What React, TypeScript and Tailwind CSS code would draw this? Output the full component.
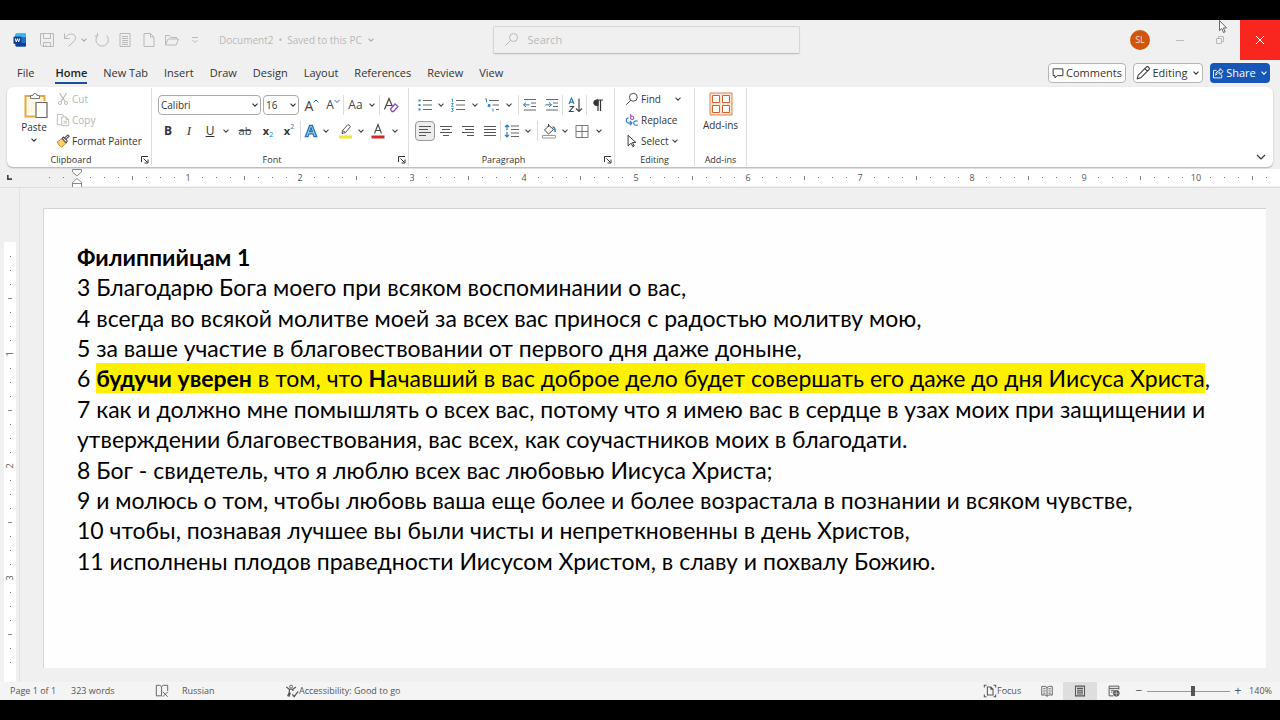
import type { ReactNode } from 'react';

const Chev = ({ className = 'text-[#444]' }: { className?: string }) => (
  <svg viewBox="0 0 8 8" className={`size-2 shrink-0 ${className}`} fill="none" stroke="currentColor" strokeWidth="1.1">
    <path d="M1.5 2.7 4 5.2 6.5 2.7" />
  </svg>
);

const Icon = ({ children, className = 'size-4', box = '0 0 16 16' }: { children: ReactNode; className?: string; box?: string }) => (
  <svg viewBox={box} className={`shrink-0 ${className}`} fill="none" stroke="currentColor" strokeWidth="1" aria-hidden="true">
    {children}
  </svg>
);

const Btn = ({ label, className = 'w-5', children }: { label: string; className?: string; children: ReactNode }) => (
  <button type="button" aria-label={label} className={`flex h-5 shrink-0 items-center justify-center ${className}`}>
    {children}
  </button>
);

const Drop = ({ label, className = 'w-4' }: { label: string; className?: string }) => (
  <Btn label={label} className={className}>
    <Chev />
  </Btn>
);

const Sep = () => <span className="h-5 w-px shrink-0 bg-[#dcdcdc]" />;

const Launcher = ({ label }: { label: string }) => (
  <button type="button" aria-label={label} className="absolute right-0.5 bottom-0.5">
    <Icon className="size-2" box="0 0 8 8">
      <path d="M.5 6V.5H7M2.5 2.5l4 4M7 3.5V7H3.5" />
    </Icon>
  </button>
);

const Group = ({ name, className, launcher, children }: { name: string; className: string; launcher?: boolean; children: ReactNode }) => (
  <section aria-label={name} className={`relative flex shrink-0 flex-col border-r border-[#dedede] ${className}`}>
    <div className="flex-1">{children}</div>
    <div className={`h-3 text-center text-[9px] leading-3 ${launcher ? 'pr-4' : ''}`}>{name}</div>
    {launcher && <Launcher label={`${name} settings`} />}
  </section>
);

const Lines = ({ rows }: { rows: [number, number][] }) => (
  <Icon className="size-4 text-[#555]">
    {rows.map(([a, b], i) => (
      <path key={i} d={`M${a} ${3.5 + i * 3}H${b}`} />
    ))}
  </Icon>
);

const tabs = ['New Tab', 'Insert', 'Draw', 'Design', 'Layout', 'References', 'Review', 'View'];

const tickKind = (n: number) => (n % 8 === 0 ? 'inch' : n % 4 === 0 ? 'half' : 'dot');

const HorizontalRuler = () => (
  <div className="relative flex h-[19px] shrink-0 overflow-hidden border-b border-[#dcdcdc] pb-px">
    <div className="flex w-[42px] shrink-0 items-center">
      <svg viewBox="0 0 6 6" className="ml-[7px] size-[5px]" fill="none" stroke="#444" strokeWidth="2">
        <path d="M1 0V5H6" />
      </svg>
    </div>
    <div className="flex w-[35px] shrink-0">
      {[-2, -1].map((n) => (
        <span key={n} className="flex w-[14px] items-center justify-center">
          <i className="size-px bg-[#777]" />
        </span>
      ))}
    </div>
    <div className="flex min-w-0 flex-1 bg-white pl-[6px]">
      {Array.from({ length: 85 }, (_, i) => i + 1).map((n) => (
        <span key={n} className="flex w-[14px] shrink-0 items-center justify-center text-[9px] text-[#555]">
          {tickKind(n) === 'inch' ? n / 8 : <i className={tickKind(n) === 'half' ? 'h-1 w-px bg-[#888]' : 'size-px bg-[#777]'} />}
        </span>
      ))}
    </div>
    <svg viewBox="0 0 10 20" className="absolute top-0 left-[72px] h-5 w-2.5" fill="#fff" stroke="#888" strokeWidth="1">
      <path d="M.5.5h9v2.500L5 7 .5 3zM.5 18.500v-5L5 9.500l4.500 4v5zM.5 14.500h9" />
    </svg>
  </div>
);

const VerticalRuler = () => (
  <div className="flex w-5 shrink-0 border-r border-[#e2e2e2] pt-[54px] pl-1">
    <div className="flex w-3 flex-col bg-white pt-[7px]">
      {Array.from({ length: 30 }, (_, i) => i + 1).map((n) => (
        <span key={n} className="flex h-[14px] shrink-0 items-center justify-center text-[9px] leading-[14px] text-[#555]">
          {tickKind(n) === 'inch' ? (
            <b className="-rotate-90 font-normal">{n / 8}</b>
          ) : (
            <i className={tickKind(n) === 'half' ? 'h-px w-1 bg-[#888]' : 'size-px bg-[#777]'} />
          )}
        </span>
      ))}
    </div>
  </div>
);

const TitleBar = () => (
  <header className="relative flex h-10 shrink-0 items-center text-[#b9b9b9]">
    <div className="flex flex-1 items-center pl-3">
      <svg viewBox="0 0 16 16" className="mr-[11px] size-4" aria-label="Word">
        <rect x="3.500" y="1.500" width="10.500" height="13" rx="1" fill="#1f6fd6" />
        <path d="M4.500 1.500H13a1 1 0 0 1 1 1V5H3.500V2.500a1 1 0 0 1 1-1z" fill="#35b8f2" />
        <path d="M3.500 11H14v2.500a1 1 0 0 1-1 1H4.500a1 1 0 0 1-1-1z" fill="#103f91" />
        <rect x="1.500" y="4.500" width="8" height="7.500" rx="1" fill="#153f8a" />
        <path d="M3.300 6.500l1 3.500 1.200-3.300L6.700 10l1-3.500" fill="none" stroke="#fff" strokeWidth="1" />
      </svg>
      <Btn label="Save" className="w-4">
        <Icon>
          <path d="M1.500 1.500h13v13h-11l-2-2zM4.500 1.500v5h7v-5M4.500 14.500v-4h7v4M7 14.500v-2" />
        </Icon>
      </Btn>
      <Btn label="Undo" className="ml-[7px] w-4">
        <Icon>
          <path d="M2.500 1.500v5h5M2.500 6.500C5 3 7.500 2 9.500 2a4 4 0 0 1 3 6.700L6.500 14.500" />
        </Icon>
      </Btn>
      <Btn label="Undo history" className="w-3">
        <Chev className="text-[#aaa]" />
      </Btn>
      <Btn label="Repeat" className="ml-1 w-4">
        <Icon>
          <path d="M12.500 3.500A6.200 6.200 0 1 1 3.500 3.800M3.500.8v3.200H.8" />
        </Icon>
      </Btn>
      <Btn label="Reading page" className="ml-[7px] w-4">
        <Icon>
          <path d="M3 1.500h10v13H3zM5 4.500h6M5 6.500h6M5 8.500h6M5 10.500h6M5 12.500h6" />
        </Icon>
      </Btn>
      <Btn label="New" className="ml-2 w-4">
        <Icon>
          <path d="M3 1.500h6.500L13 5v9.500H3zM9.500 1.500V5H13" />
        </Icon>
      </Btn>
      <Btn label="Open" className="ml-[7px] w-4">
        <Icon>
          <path d="M1.500 13V3.500h4l1.500 2h5.500V7M1.500 13 4 7h10.500l-2.300 6z" />
        </Icon>
      </Btn>
      <Btn label="Customize toolbar" className="ml-[7px] w-4">
        <Icon className="size-2" box="0 0 8 8">
          <path d="M1 1.500h6M1.500 4 4 6.500 6.500 4" />
        </Icon>
      </Btn>
      <button type="button" className="ml-4 flex items-center gap-[5px] text-[10px] whitespace-nowrap">
        <span>Document2</span>
        <span>•</span>
        <span>Saved to this PC</span>
        <Chev className="text-[#aaa]" />
      </button>
    </div>
    <label className="flex h-7 w-[307px] items-center gap-2 rounded-xs border border-[#d6d6d6] border-b-[#bdbdbd] px-2.5 shadow-xs">
      <Icon className="size-4">
        <circle cx="9.500" cy="5.500" r="4" />
        <path d="M6.500 8.500 1.500 13.500" />
      </Icon>
      <input aria-label="Search" placeholder="Search" className="min-w-0 flex-1 bg-transparent text-[11px] outline-none placeholder:text-[#b9b9b9]" />
    </label>
    <div className="flex flex-1 items-center justify-end">
      <button type="button" className="size-5 rounded-full bg-[#d0560f] text-[9px] text-[#ffdcc4]">
        SL
      </button>
      <Btn label="Minimize" className="ml-2.5 w-10">
        <i className="h-px w-2 bg-[#bbb]" />
      </Btn>
      <Btn label="Restore" className="w-10">
        <Icon className="size-2.5" box="0 0 10 10">
          <path d="M1.500 3.500h5v5h-5zM3.500 3V1.500h5v5H7" />
        </Icon>
      </Btn>
      <button type="button" aria-label="Close" className="flex size-10 items-center justify-center bg-[#f8261f] text-white">
        <Icon className="size-2.5" box="0 0 10 10">
          <path d="m1 1 8 8M9 1 1 9" />
        </Icon>
      </button>
    </div>
    <svg viewBox="0 0 10 14" className="absolute top-0 right-[52px] h-3.5 w-2.5" fill="#fff" stroke="#555" strokeWidth=".9">
      <path d="M1.500.5v10l2.300-2 1.700 4 1.600-.7-1.700-3.900h3.100z" />
    </svg>
  </header>
);

const TabRow = () => (
  <nav className="flex h-[27px] shrink-0 items-center pr-2.5 pl-[17px] text-[11px] text-[#333]">
    <button type="button" className="mr-[21px]">File</button>
    <div className="flex flex-1 items-center gap-4">
      <button type="button" className="relative font-semibold text-[#222] after:absolute after:inset-x-0 after:-bottom-0.5 after:h-0.5 after:bg-[#1a4f9c]">
        Home
      </button>
      {tabs.map((t) => (
        <button type="button" key={t}>{t}</button>
      ))}
    </div>
    <div className="flex gap-[7px] pb-px">
      <button type="button" className="flex h-5 w-[78px] items-center justify-center gap-0.5 rounded-sm border border-[#b5b5b5] bg-white">
        <Icon className="size-3">
          <path d="M1.500 2.500h13v9H7l-3 3v-3H1.500z" strokeWidth="1.300" />
        </Icon>
        Comments
      </button>
      <button type="button" className="flex h-5 w-[70px] items-center justify-center gap-0.5 rounded-sm border border-[#b5b5b5] bg-white">
        <Icon className="size-3.5">
          <path d="m1.500 14.500 1-4 9-9a1.500 1.500 0 0 1 3 3l-9 9zM10 3l3 3" strokeWidth="1.200" />
        </Icon>
        Editing
        <Chev className="ml-0.5" />
      </button>
      <button type="button" className="flex h-5 w-[60px] items-center justify-center gap-0.5 rounded-sm bg-[#1656b8] text-white">
        <Icon className="size-3">
          <path d="M6 4.500H2v10h11V10M5 11c0-4 2-6 5.500-6V2L15 6l-4.500 4V7.500C8 7.500 6.500 8.500 5 11z" strokeWidth="1.200" />
        </Icon>
        Share
        <Chev className="ml-0.5 text-white" />
      </button>
    </div>
  </nav>
);

const Clipboard = () => (
  <Group name="Clipboard" className="w-[145px]" launcher>
    <div className="flex">
      <button type="button" className="ml-[11px] flex w-8 flex-col items-center pt-[3px] text-[10px]">
        <svg viewBox="0 0 26 28" className="ml-1 h-7 w-[26px]" fill="none" aria-hidden="true">
          <path d="M7 5H2.500v20.500H12M17 5h4.500v5" stroke="#e9a63a" strokeWidth="2" />
          <path d="M4.500 7h15v4H12v12H4.500z" fill="#fff7e6" />
          <path d="M7.500 7.500v-3H10a2 2 0 0 1 4 0h2.500v3z" fill="#fff" stroke="#777" />
          <path d="M13 11.500h11v15H13z" fill="#fff" stroke="#666" strokeWidth="1.200" />
        </svg>
        <span className="leading-4">Paste</span>
        <Chev className="mt-px" />
      </button>
      <div className="ml-[6px] flex flex-col gap-[1px] pt-px text-[10px]">
        <button type="button" className="flex h-5 items-center gap-0.5 text-[#b5b5b5]">
          <Icon className="size-3.5">
            <path d="M4 1.500 10.500 11M12 1.500 5.500 11" strokeWidth="1.200" />
            <circle cx="4.500" cy="12.500" r="1.800" />
            <circle cx="11.500" cy="12.500" r="1.800" />
          </Icon>
          Cut
        </button>
        <button type="button" className="flex h-5 items-center gap-0.5 text-[#b5b5b5]">
          <Icon className="size-3.5">
            <path d="M5.500 13.500h-4v-12h6l1.500 2M6.500 4.500h5l3 3v7h-8zM11.500 4.500v3h3M8.500 9.500h4M8.500 11.500h4" />
          </Icon>
          Copy
        </button>
        <button type="button" className="flex h-5 items-center gap-0.5 whitespace-nowrap">
          <Icon className="size-3.5">
            <path d="m1.500 9 5-3.500 4.500 5L6.500 15c-2-.5-4-3-5-6z" fill="#f6cf72" stroke="#c98514" />
            <path d="m7 5 1.500-1.500L13 8l-1.500 2zM10 4.500 13.500 1l1.500 1.500L11.500 6" fill="#fff" stroke="#444" strokeWidth="1.200" />
          </Icon>
          Format Painter
        </button>
      </div>
    </div>
  </Group>
);

const FontGroup = () => (
  <Group name="Font" className="w-[257px]" launcher>
    <div className="flex h-[33px] items-end pb-1.5 pl-1.5">
      <span className="relative mr-0.5 flex items-center">
        <select aria-label="Font name" className="h-5 w-[103px] appearance-none rounded-sm border border-[#aaa] bg-white pl-0.5 text-[10px]">
          <option>Calibri</option>
        </select>
        <Chev className="pointer-events-none absolute right-0.5" />
      </span>
      <span className="relative flex items-center">
        <select aria-label="Font size" className="h-5 w-9 appearance-none rounded-sm border border-[#aaa] bg-white pl-0.5 text-[10px]">
          <option>16</option>
        </select>
        <Chev className="pointer-events-none absolute right-0.5" />
      </span>
      <Btn label="Grow font" className="ml-0.5 w-[22px]">
        <span className="text-[14px] text-[#444]">A</span>
        <Icon className="mb-2 size-1.5 text-[#2b6cb0]" box="0 0 6 6"><path d="M.5 4.500 3 2l2.500 2.500" /></Icon>
      </Btn>
      <Btn label="Shrink font" className="w-5">
        <span className="text-[12px] text-[#444]">A</span>
        <Icon className="mb-2 size-1.5 text-[#2b6cb0]" box="0 0 6 6"><path d="M.5 2 3 4.500 5.500 2" /></Icon>
      </Btn>
      <Sep />
      <Btn label="Change case" className="w-[23px]">
        <span className="text-[12px] text-[#444]">Aa</span>
      </Btn>
      <Drop label="Case options" className="mr-0.5 w-2.5" />
      <Sep />
      <Btn label="Clear formatting" className="w-[22px]">
        <Icon className="size-4 text-[#444]">
          <path d="M1.500 12.500 6 1.500l3.500 8M3 8.500h5.500" strokeWidth="1.200" />
          <path d="m7.500 12 4.500-5 3 2.500-4.500 5H9z" fill="#fff" stroke="#8a4fb5" strokeWidth="1.300" />
        </Icon>
      </Btn>
    </div>
    <div className="flex items-center pl-1.5">
      <Btn label="Bold" className="w-5"><b className="text-xs">B</b></Btn>
      <Btn label="Italic" className="w-[22px]"><i className="font-['Liberation_Serif',serif] text-[13px]">I</i></Btn>
      <Btn label="Underline" className="w-5"><u className="text-[12px]">U</u></Btn>
      <Drop label="Underline options" className="w-3" />
      <Btn label="Strikethrough" className="w-[26px]"><s className="text-[11px] text-[#444]">ab</s></Btn>
      <Btn label="Subscript" className="w-5"><b className="text-[11px]">x</b><span className="mt-2 text-[7px] text-[#2080c0]">2</span></Btn>
      <Btn label="Superscript" className="w-[22px]"><b className="text-[11px]">x</b><span className="mb-2 text-[7px] text-[#2080c0]">2</span></Btn>
      <Sep />
      <Btn label="Text effects" className="w-5">
        <Icon className="size-3.5 text-[#1d6fb8]">
          <path d="M1.500 14.500 6.500 1.500h3l5 13h-3l-1.200-3.300H5.700L4.500 14.500zM6.500 8.700h3L8 4.500z" fill="#a6d4f5" strokeWidth="1.500" />
        </Icon>
      </Btn>
      <Drop label="Text effect options" className="w-2.5" />
      <Btn label="Highlight" className="ml-1 w-5">
        <Icon>
          <path d="M2 12.500h13v3H2z" fill="#f2e535" stroke="none" />
          <path d="m5 10.500.5-3L11 1.500l2.500 2L8.500 9.500zM5.500 7.500l3 2" stroke="#555" />
        </Icon>
      </Btn>
      <Drop label="Highlight options" className="w-3" />
      <Btn label="Font colour" className="w-[22px]">
        <Icon>
          <path d="M1.500 12.500h13v3h-13z" fill="#cf2a27" stroke="none" />
          <path d="M4.500 10.500 8 1.500l3.500 9M5.500 7.500h5" stroke="#444" strokeWidth="1.100" />
        </Icon>
      </Btn>
      <Drop label="Font colour options" className="w-3" />
    </div>
  </Group>
);

const Paragraph = () => (
  <Group name="Paragraph" className="w-[206px]" launcher>
    <div className="flex h-[33px] items-end pb-1.5 pl-1.5">
      <Btn label="Bullets">
        <Icon className="size-4 text-[#666]">
          <path d="M6 3.500h9M6 8h9M6 12.500h9" />
          <path d="M1.500 2.500h2v2h-2zM1.500 7h2v2h-2zM1.500 11.500h2v2h-2z" fill="#2a8cc7" stroke="none" />
        </Icon>
      </Btn>
      <Drop label="Bullet options" className="w-3" />
      <Btn label="Numbering" className="w-[22px]">
        <Icon className="size-4 text-[#666]">
          <path d="M6 3.500h9M6 8h9M6 12.500h9" />
          <path d="M1.500 2h1v3M1.300 6.500h1.800L1.500 9.500h2M1.300 11.500h2L2.200 13c2 0 1 2-1 1.500" stroke="#2a8cc7" strokeWidth=".9" />
        </Icon>
      </Btn>
      <Drop label="Numbering options" className="w-3" />
      <Btn label="Multilevel list" className="w-[22px]">
        <Icon className="size-4 text-[#666]">
          <path d="M5 3.500h10M8.500 8H15M12 12.500h3" />
          <path d="M1 2h1.500v3M4 7.500h2v2.200H4V8.500h2M9 11.500v3" stroke="#2a8cc7" />
        </Icon>
      </Btn>
      <Drop label="Multilevel options" className="mr-1 w-[11px]" />
      <Sep />
      <Btn label="Decrease indent" className="w-[22px]">
        <Icon className="size-4 text-[#666]">
          <path d="M2 2.500h12M9 6h5M9 9.500h5M2 13h12" />
          <path d="M7.500 7.800h-6M4 5.500 1.500 7.800 4 10" stroke="#2a7fbf" />
        </Icon>
      </Btn>
      <Btn label="Increase indent" className="w-[21px]">
        <Icon className="size-4 text-[#666]">
          <path d="M2 2.500h12M9 6h5M9 9.500h5M2 13h12" />
          <path d="M1.500 7.800h6M5 5.500l2.500 2.300L5 10" stroke="#2a7fbf" />
        </Icon>
      </Btn>
      <Sep />
      <Btn label="Sort" className="w-[23px]">
        <Icon>
          <path d="M2 7 4.500 1 7 7M3 5.200h3" stroke="#2a7fbf" strokeWidth="1.200" />
          <path d="M2.500 9.500h4l-4 5h4.300M12 1.500v13M9 11.500l3 3 3-3" stroke="#444" strokeWidth="1.200" />
        </Icon>
      </Btn>
      <Sep />
      <Btn label="Show marks" className="w-[22px]">
        <Icon className="size-3 text-[#333]" box="0 0 12 12">
          <path d="M6 1H4.500a2.500 2.500 0 0 0 0 5.500H6z" fill="currentColor" />
          <path d="M6 1v11M8.500 1v11M5 1h6" strokeWidth="1.200" />
        </Icon>
      </Btn>
    </div>
    <div className="flex items-center pl-1.5">
      <Btn label="Align left" className="w-5 rounded-sm border border-[#999] bg-[#ececec]">
        <Lines rows={[[2, 14], [2, 11], [2, 14], [2, 9]]} />
      </Btn>
      <Btn label="Center" className="w-[22px]"><Lines rows={[[2, 14], [4, 12], [2, 14], [5, 11]]} /></Btn>
      <Btn label="Align right" className="w-[22px]"><Lines rows={[[2, 14], [5, 14], [2, 14], [7, 14]]} /></Btn>
      <Btn label="Justify" className="w-[21px]"><Lines rows={[[2, 14], [2, 14], [2, 14], [2, 14]]} /></Btn>
      <Sep />
      <Btn label="Line spacing" className="w-[22px]">
        <Icon className="size-4 text-[#666]">
          <path d="M7 3h8M7 6.500h8M7 10h8M7 13.500h8" />
          <path d="M3 2v5M1 4l2-2 2 2M3 9v5M1 12l2 2 2-2" stroke="#2a7fbf" strokeWidth="1.200" />
        </Icon>
      </Btn>
      <Drop label="Spacing options" className="mr-1 w-2.5" />
      <Sep />
      <Btn label="Shading" className="w-[22px]">
        <Icon className="size-4 text-[#444]">
          <path d="M1.500 12.500h13v2.500h-13z" stroke="#999" fill="#fff" />
          <path d="M7.500 1v3M8 2.500l4.500 4L7.500 11 3.500 7z" />
          <path d="M11.500 4c2 0 2.700 2 2.700 5" stroke="#2a7fbf" strokeWidth="1.500" />
        </Icon>
      </Btn>
      <Drop label="Shading options" className="w-2.5" />
      <Btn label="Borders" className="w-6">
        <Icon className="size-4 text-[#777]"><path d="M2 2.500h12v12H2zM8 2.500v12M2 8.500h12" /></Icon>
      </Btn>
      <Drop label="Border options" className="w-2.5" />
    </div>
  </Group>
);

const Editing = () => (
  <Group name="Editing" className="w-20">
    <div className="flex flex-col gap-[1px] pt-px pl-2.5 text-[10px]">
      <div className="flex">
        <button type="button" className="flex h-5 w-[47px] items-center gap-0.5">
          <Icon className="size-3.5">
            <circle cx="9.500" cy="6" r="4.500" />
            <path d="M6.500 9.500 1.500 14.500" />
          </Icon>
          Find
        </button>
        <Drop label="Find options" className="w-3" />
      </div>
      <button type="button" className="flex h-5 items-center gap-0.5">
        <Icon className="size-3.5">
          <path d="M6.500 1v6M6.500 4.500c1-1.500 3.500-1 3.500 1s-2.500 2.500-3.500 1" stroke="#9a5cc0" strokeWidth="1.300" />
          <path d="M14.500 9.500c-3-1.500-4.500.5-4.500 2s2 3.500 4.500 2M4 5.500c-3 0-3.500 5 0 6h3.500M5.500 9l2.500 2.500L5.500 14" stroke="#2a7fd0" strokeWidth="1.300" />
        </Icon>
        Replace
      </button>
      <button type="button" className="flex h-5 items-center gap-0.5">
        <Icon className="size-3.5">
          <path d="M3.500 1.500v12L7 10.500l2 4 1.500-.8-2-4h4z" strokeWidth="1.100" />
        </Icon>
        Select
        <Chev />
      </button>
    </div>
  </Group>
);

const Ribbon = () => (
  <div className="mx-[7px] flex h-20 shrink-0 rounded-md bg-white pt-px pb-px text-[#333] shadow-[0_1px_2px_rgba(0,0,0,.28)]">
    <Clipboard />
    <FontGroup />
    <Paragraph />
    <Editing />
    <Group name="Add-ins" className="w-[52px]">
      <button type="button" className="flex w-full flex-col items-center pt-[3px] text-[10px]">
        <Icon className="size-[26px]" box="0 0 26 26">
          <path d="M2 2h22v22H2z" fill="#fce4d6" stroke="#e0804f" />
          <path d="M4.500 4.500h7v7h-7zM14.500 4.500h7v7h-7zM4.500 14.500h7v7h-7zM14.500 14.500h7v7h-7z" fill="#fff" stroke="#d0622d" />
        </Icon>
        <span className="leading-4">Add-ins</span>
      </button>
    </Group>
    <button type="button" aria-label="Collapse ribbon" className="mt-auto mr-[7px] mb-1 ml-auto">
      <Icon className="size-2.5" box="0 0 10 10"><path d="m1 3 4 4 4-4" strokeWidth="1.200" /></Icon>
    </button>
  </div>
);

const StatusBar = () => (
  <footer className="flex h-[18px] shrink-0 items-center bg-[#f4f4f4] pr-2 pl-2.5 text-[9px] text-[#555]">
    <span className="w-[61px]">Page 1 of 1</span>
    <span className="w-[84px]">323 words</span>
    <Icon className="size-3.5">
      <path d="M7.500 13.500H1.500v-12h4l2 1.500v10.500M7.500 3l2-1.500h5V8M9 9l5.500 5.500M14.500 9 9 14.500" />
    </Icon>
    <span className="ml-[13px] w-[103px]">Russian</span>
    <Icon className="size-3.5">
      <circle cx="7" cy="3" r="1.700" />
      <path d="M1.500 3.500 5 6v3l-2 5M12.500 3.500 9 6v2M5 6h4M6 10l-1.500 4.500M8.500 12l2 2.500 4.500-6" strokeWidth="1.400" />
    </Icon>
    <span>Accessibility: Good to go</span>
    <div className="ml-auto flex h-full items-center">
      <Icon className="size-3.5">
        <path d="M1.500 4V1.500H4M12 1.500h2.500V4M1.500 12v2.500H4M12 14.500h2.500V12M5 3.500h4L11.500 6v6.500H5zM9 3.500V6h2.500" strokeWidth="1.200" />
      </Icon>
      <button type="button" className="w-[34px] text-left">Focus</button>
      <Btn label="Read mode" className="w-8">
        <Icon className="size-3">
          <path d="M8 3.500C6 1.500 3 1.500 1 2v11.500c2-.5 5-.5 7 1.500 2-2 5-2 7-1.500V2c-2-.5-5-.5-7 1.500zV15M3 5h3M3 8h3M3 11h3M10 5h3M10 8h3M10 11h3" strokeWidth="1.200" />
        </Icon>
      </Btn>
      <button type="button" aria-label="Print layout" className="flex h-full w-[34px] items-center justify-center bg-[#dedede]">
        <Icon className="size-3">
          <path d="M2 1.500h12v13H2zM4 4.500h8M4 7h8M4 9.500h8M4 12h8" strokeWidth="1.400" />
        </Icon>
      </button>
      <Btn label="Web layout" className="w-[34px]">
        <Icon className="size-3">
          <path d="M7 14.500H1.500v-13h13V6M1.500 4.500h13M4 7h4M4 9.500h2" strokeWidth="1.300" />
          <circle cx="11" cy="11" r="4" fill="#555" />
          <path d="M7.500 11h7M11 7.500v7" stroke="#ddd" strokeWidth=".8" />
        </Icon>
      </Btn>
      <button type="button" aria-label="Zoom out" className="ml-0.5 w-3 text-xs leading-3">−</button>
      <input
        type="range"
        aria-label="Zoom"
        min={0}
        max={100}
        defaultValue={56}
        className="mx-0.5 h-3 w-[83px] appearance-none bg-[linear-gradient(#999,#999)] bg-[length:100%_1px] bg-center bg-no-repeat [&::-webkit-slider-thumb]:h-2.5 [&::-webkit-slider-thumb]:w-1 [&::-webkit-slider-thumb]:appearance-none [&::-webkit-slider-thumb]:bg-[#555]"
      />
      <button type="button" aria-label="Zoom in" className="w-3 text-xs leading-3">+</button>
      <span className="w-7 text-right">140%</span>
    </div>
  </footer>
);

const Page = () => (
  <article className="flex-1 border-t border-l border-[#d4d4d4] bg-[#fefefe] pt-[33px] pl-[33px] font-['Lato','Open_Sans',sans-serif] text-[23px] leading-[1.32] whitespace-nowrap text-black">
    <h1 className="font-bold">Филиппийцам 1</h1>
    <p>3 Благодарю Бога моего при всяком воспоминании о вас,</p>
    <p>4 всегда во всякой молитве моей за всех вас принося с радостью молитву мою,</p>
    <p>5 за ваше участие в благовествовании от первого дня даже доныне,</p>
    <p>
      6{' '}
      <mark className="bg-[#fff000] py-px text-black">
        <b>будучи уверен</b> в том, что <b>Н</b>ачавший в вас доброе дело будет совершать его даже до дня Иисуса Христа
      </mark>
      ,
    </p>
    <p>
      7 как и должно мне помышлять о всех вас, потому что я имею вас в сердце в узах моих при защищении и
      <br />
      утверждении благовествования, вас всех, как соучастников моих в благодати.
    </p>
    <p>8 Бог - свидетель, что я люблю всех вас любовью Иисуса Христа;</p>
    <p>9 и молюсь о том, чтобы любовь ваша еще более и более возрастала в познании и всяком чувстве,</p>
    <p>10 чтобы, познавая лучшее вы были чисты и непреткновенны в день Христов,</p>
    <p>11 исполнены плодов праведности Иисусом Христом, в славу и похвалу Божию.</p>
  </article>
);

export default function App() {
  return (
    <div className="flex min-h-screen flex-col bg-black py-5 font-['Open_Sans','Noto_Sans',sans-serif]">
      <div className="flex flex-1 flex-col bg-[#f0f0f0]">
        <TitleBar />
        <TabRow />
        <Ribbon />
        <div className="h-0.5 shrink-0" />
        <HorizontalRuler />
        <main className="flex flex-1">
          <VerticalRuler />
          <div className="flex flex-1 pt-5 pr-3.5 pb-3.5 pl-[23px]">
            <Page />
          </div>
        </main>
        <StatusBar />
      </div>
    </div>
  );
}
